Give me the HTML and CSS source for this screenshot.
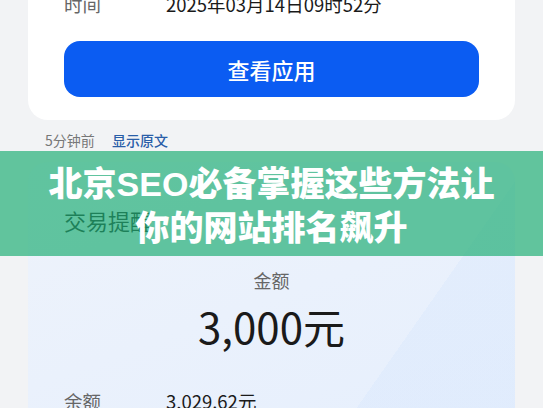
FILE: index.html
```html
<!DOCTYPE html>
<html lang="zh-CN">
<head>
<meta charset="UTF-8">
<meta name="viewport" content="width=device-width, initial-scale=1.0">
<title>北京SEO必备掌握这些方法让你的网站排名飙升</title>
<link rel="stylesheet" href="styles.css">
</head>
<body>
<div class="page">
    <div class="card card-top">
        <div class="row">
            <span class="label">时间</span>
            <span class="value">2025年03月14日09时52分</span>
        </div>
        <button class="btn">查看应用</button>
    </div>

    <div class="meta">
        <span class="ago">5分钟前</span>
        <span class="orig">显示原文</span>
    </div>

    <div class="card card-notice">
        <div class="notice-title">交易提醒</div>
        <div class="amount-label">金额</div>
        <div class="amount">3,000元</div>
        <div class="row">
            <span class="label">余额</span>
            <span class="value">3,029.62元</span>
        </div>
    </div>

    <div class="banner">
        <h1>北京<span class="latin">SEO</span>必备掌握这些方法让<br>你的网站排名飙升</h1>
    </div>
</div>
</body>
</html>
```

FILE: styles.css
```css
body {
    margin: 0;
    padding: 0;
    background-color: #f2f3f5;
    font-family: "Noto Sans CJK SC", "Noto Sans", sans-serif;
    color: #1a1a1a;
    overflow: hidden;
}
.page {
    position: relative;
    height: 408px;
    overflow: hidden;
}
.card {
    margin: 0 28px;
    border-radius: 20px;
}
.card-top {
    margin-top: -24px;
    padding: 16px 36px 23px;
    background-color: #fff;
}
.row {
    display: flex;
    font-size: 18.5px;
    line-height: 24px;
}
.label {
    width: 102px;
    color: #666;
}
.value {
    color: #1a1a1a;
}
.btn {
    display: block;
    width: 100%;
    height: 56px;
    margin-top: 25px;
    border: none;
    border-radius: 16px;
    background-color: #0b5cf2;
    color: #fff;
    font-family: inherit;
    font-size: 22px;
    font-weight: 500;
}
.meta {
    margin: 10px 45px 0;
    font-size: 14px;
    line-height: 20px;
}
.ago {
    color: #777;
    margin-right: 14px;
}
.orig {
    color: #2a5ea8;
    font-weight: 500;
}
.card-notice {
    margin-top: 12px;
    padding: 43px 36px 20px;
    background:
        linear-gradient(125deg, transparent 74%, rgba(210, 228, 252, 0.3) 74%),
        linear-gradient(160deg, #eef3fb, #e6effd);
}
.notice-title {
    font-size: 22px;
    line-height: 30px;
    color: #111;
}
.amount-label {
    margin-top: 33px;
    text-align: center;
    font-size: 18px;
    line-height: 24px;
    color: #666;
}
.amount {
    margin-top: 9px;
    text-align: center;
    font-size: 42px;
    line-height: 50px;
    color: #1a1a1a;
}
.card-notice .row {
    margin-top: 38px;
}
.banner {
    position: absolute;
    top: 151px;
    left: 0;
    right: 0;
    height: 105px;
    display: flex;
    align-items: center;
    justify-content: center;
    background-color: rgba(35, 175, 119, 0.7);
}
.banner h1 {
    margin: 0;
    text-align: center;
    color: #fff;
    font-size: 34px;
    line-height: 42px;
    font-weight: 900;
}
.latin {
    font-family: "Liberation Sans", sans-serif;
    font-weight: bold;
}
```
